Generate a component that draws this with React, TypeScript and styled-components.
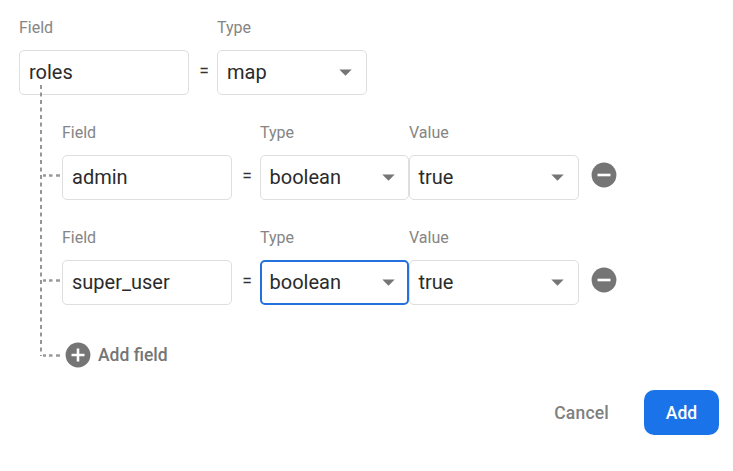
import React from "react";
import styled, { createGlobalStyle } from "styled-components";

const GlobalStyle = createGlobalStyle`
  *, *::before, *::after { box-sizing: border-box; }
  body { margin: 0; background: #fff; font-family: Roboto, sans-serif; }
`;

const Dialog = styled.main`
  width: 733px;
  height: 471px;
  overflow: hidden;
  background: #fff;
`;

const Row = styled.div<{ $nested?: boolean }>`
  position: relative;
  display: flex;
  align-items: flex-end;
  height: ${(p) => (p.$nested ? 105 : 95)}px;
  padding-left: ${(p) => (p.$nested ? 43 : 0)}px;
`;

const Tree = styled.div`
  padding-left: 19px;
`;

const Children = styled.div`
  position: relative;
`;

const Trunk = styled.svg`
  position: absolute;
  z-index: 1;
  left: 20px;
  top: -11px;
`;

const Branch = styled.svg<{ $bottom: number }>`
  position: absolute;
  left: 24px;
  bottom: ${(p) => p.$bottom}px;
`;

const Column = styled.label<{ $width: number }>`
  display: flex;
  flex-direction: column;
  gap: 12px;
  width: ${(p) => p.$width}px;
`;

const Caption = styled.span`
  height: 20px;
  font-size: 16px;
  line-height: 20px;
  color: #858585;
`;

const Control = styled.span<{ $focused?: boolean; $inset: number }>`
  display: flex;
  align-items: center;
  justify-content: space-between;
  height: 45px;
  padding: 0 ${(p) => p.$inset - (p.$focused ? 1 : 0)}px 0 ${(p) => (p.$focused ? 8 : 9)}px;
  border: ${(p) => (p.$focused ? "2px solid #2471de" : "1px solid #dedede")};
  border-radius: 5px;
  font-size: 20px;
  color: #2b2b2b;
`;

const Value = styled.span<{ $shift: number }>`
  height: 26px;
  margin-left: ${(p) => p.$shift}px;
  line-height: 24px;
`;

const Equals = styled.span`
  width: 28px;
  height: 45px;
  padding-left: 2px;
  font-size: 17.5px;
  line-height: 42px;
  text-align: center;
  color: #333;
`;

const IconButton = styled.button`
  display: flex;
  margin: 0 0 12px 11.5px;
  padding: 0;
  border: 0;
  background: none;
`;

const AddField = styled.button`
  position: relative;
  display: flex;
  align-items: center;
  gap: 7px;
  height: 26px;
  margin-top: 37px;
  padding: 0 0 0 46px;
  border: 0;
  background: none;
  font: 500 17.5px/26px Roboto, sans-serif;
  color: #757575;
`;

const Actions = styled.footer`
  display: flex;
  justify-content: flex-end;
  gap: 15px;
  margin-top: 22px;
  padding-right: 14px;
`;

const Action = styled.button<{ $primary?: boolean }>`
  height: 45px;
  padding: 1px ${(p) => (p.$primary ? 0 : 20)}px 0;
  ${(p) => p.$primary && "width: 75px;"}
  border: 0;
  border-radius: 10px;
  background: ${(p) => (p.$primary ? "#1a73e8" : "transparent")};
  color: ${(p) => (p.$primary ? "#fff" : "#808080")};
  font: 500 17.5px/44px Roboto, sans-serif;
  letter-spacing: ${(p) => (p.$primary ? "0" : "0.2px")};
`;

const Arrow = () => (
  <svg width="13" height="7" viewBox="0 0 13 7">
    <path d="M.3.5h12.4L6.5 6.7z" fill="#757575" />
  </svg>
);

const CircleIcon = ({ plus = false }: { plus?: boolean }) => (
  <svg width="26" height="26" viewBox="0 0 26 26">
    <circle cx="13" cy="13" r="12.4" fill="#757575" />
    <path d={plus ? "M6.5 13h13M13 6.5v13" : "M6.5 13h13"} stroke="#fff" strokeWidth="2.6" />
  </svg>
);

const Dots = ({ bottom }: { bottom: number }) => (
  <Branch $bottom={bottom} width="18" height="3" viewBox="0 0 18 3">
    <path d="M0 1.5h3M6 1.5h3.5M13 1.5h4" stroke="#999" strokeWidth="2.5" />
  </Branch>
);

const FieldInput = ({ value }: { value: string }) => (
  <Column $width={170}>
    <Caption>Field</Caption>
    <Control $inset={14}>
      <Value $shift={0}>{value}</Value>
    </Control>
  </Column>
);

type SelectProps = {
  label: string;
  value: string;
  width: number;
  inset?: number;
  shift?: number;
  focused?: boolean;
};

const Select = ({ label, value, width, inset = 14, shift = 0, focused }: SelectProps) => (
  <Column $width={width}>
    <Caption>{label}</Caption>
    <Control $focused={focused} $inset={inset}>
      <Value $shift={shift}>{value}</Value>
      <Arrow />
    </Control>
  </Column>
);

const entries = [
  { name: "admin", focused: false },
  { name: "super_user", focused: true },
];

export default function App() {
  return (
    <Dialog>
      <GlobalStyle />
      <Tree>
        <Row>
          <FieldInput value="roles" />
          <Equals>=</Equals>
          <Select label="Type" value="map" width={150} />
        </Row>
        <Children>
          <Trunk width="4" height="272" viewBox="0 0 4 272">
            <path d="M2 1v271" stroke="#858585" strokeWidth="1.7" strokeDasharray="4 3.5" />
          </Trunk>
          {entries.map((entry) => (
            <Row $nested key={entry.name}>
              <Dots bottom={23} />
              <FieldInput value={entry.name} />
              <Equals>=</Equals>
              <Select label="Type" value="boolean" width={149} inset={13} shift={-0.5} focused={entry.focused} />
              <Select label="Value" value="true" width={170} shift={-0.5} />
              <IconButton aria-label="Remove field">
                <CircleIcon />
              </IconButton>
            </Row>
          ))}
          <AddField>
            <Dots bottom={11} />
            <CircleIcon plus />
            Add field
          </AddField>
        </Children>
      </Tree>
      <Actions>
        <Action>Cancel</Action>
        <Action $primary>Add</Action>
      </Actions>
    </Dialog>
  );
}
